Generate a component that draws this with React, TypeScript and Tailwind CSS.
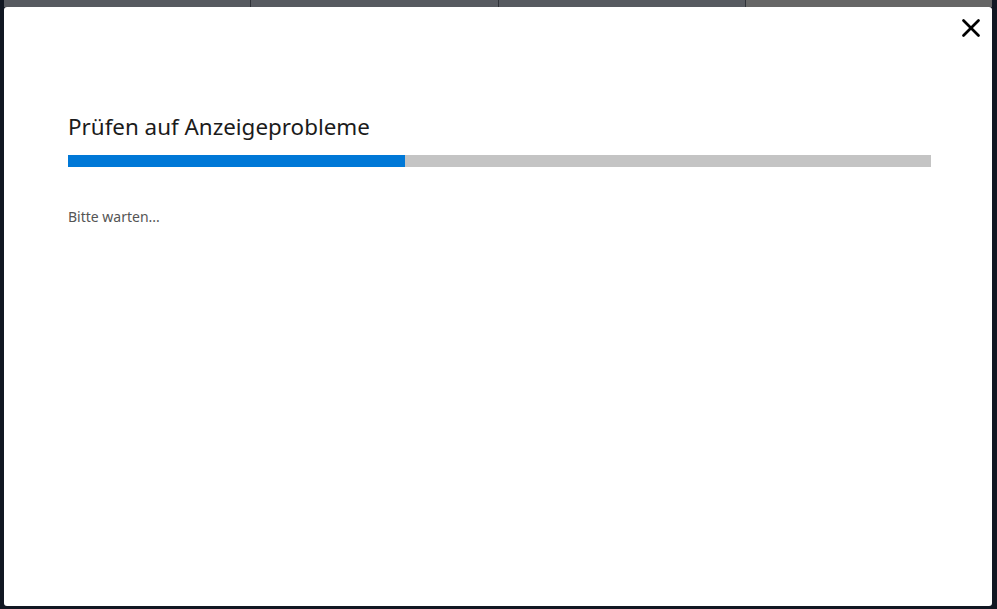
import { X } from "lucide-react";

const TABS = ["bg-[#575a60]", "bg-[#575a60]", "bg-[#575a60]", "bg-[#666666]"];

export default function App() {
  return (
    <div className="relative flex h-[609px] w-[997px] flex-col overflow-hidden bg-[#111722] font-['Noto_Sans',sans-serif]">
      {/* tab strip behind the dialog */}
      <div className="flex h-[7px] pl-[4px] pr-[5px]">
        {TABS.map((c, i) => (
          <div key={i} className={`flex-1 ${c} ${i > 0 ? "border-l border-[#2f3238]" : ""}`} />
        ))}
      </div>

      {/* dialog */}
      <div className="relative ml-[4px] mr-[5px] h-[599px] rounded-[3px] bg-white">
        <button className="absolute right-[6px] top-[6px] flex h-[30px] w-[30px] items-center justify-center text-black">
          <X className="h-[30px] w-[30px]" strokeWidth={2.2} />
        </button>

        <div className="px-[64px] pt-[106px]">
          <h1 className="text-[22.4px] leading-[28px] text-[#1b1b1b]">Prüfen auf Anzeigeprobleme</h1>
          <div className="mt-[14px] flex h-[12px] w-[863px] bg-[#c4c4c4]">
            <div className="h-full w-[337px] bg-[#0078d7]" />
          </div>
          <p className="mt-[41px] text-[14px] leading-[18px] text-[#555555]">Bitte warten...</p>
        </div>
      </div>
    </div>
  );
}
